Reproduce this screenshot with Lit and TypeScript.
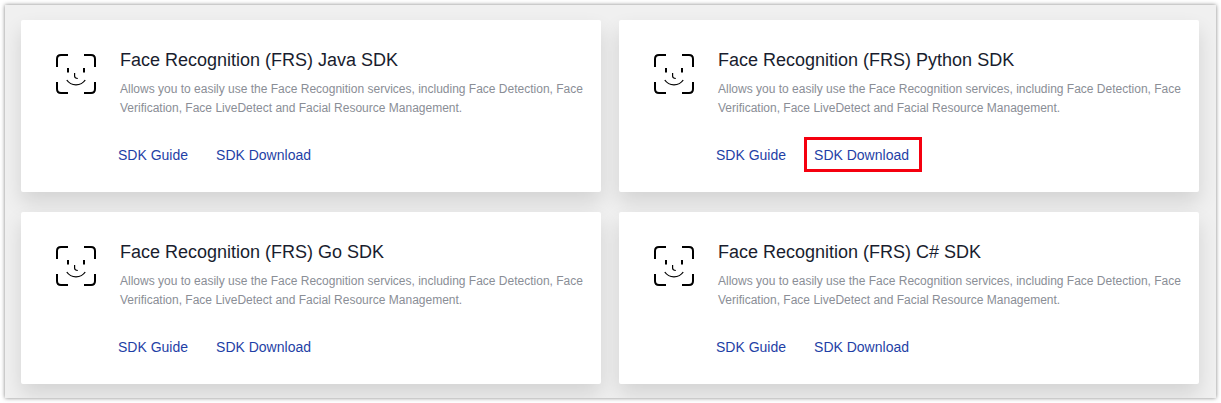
import { LitElement, html, css } from "lit";
import { customElement, property } from "lit/decorators.js";
import { classMap } from "lit/directives/class-map.js";

@customElement("sdk-card")
class SdkCard extends LitElement {
  @property() language = "";
  @property({ type: Boolean }) marked = false;

  static styles = css`
    :host {
      display: block;
      background: #fff;
      border-radius: 2px;
      box-shadow: 0 10px 20px rgba(0, 0, 0, 0.12);
    }
    .card {
      display: flex;
      align-items: flex-start;
      gap: 24px;
      padding: 28px 12px 20px 35px;
    }
    .icon {
      flex: none;
      display: block;
      width: 40px;
      height: 40px;
      margin-top: 6px;
    }
    .body {
      flex: 1;
      min-width: 0;
    }
    .title {
      margin: 0;
      font-size: 18px;
      line-height: 24px;
      font-weight: 400;
      color: #191d2e;
    }
    .text {
      margin: 8px 0 0;
      font-size: 12px;
      line-height: 19px;
      color: #8a8e96;
    }
    .links {
      display: flex;
      gap: 5px;
      margin: 19px 0 0 -12px;
    }
    .link {
      padding: 7px 10px 5px 7px;
      border: 3px solid transparent;
      font-size: 14px;
      line-height: 17px;
      color: #1f3fa6;
      text-decoration: none;
    }
    .marked {
      border-color: #f5000f;
    }
  `;

  render() {
    return html`
      <article class="card">
        <svg class="icon" viewBox="0 0 40 40" fill="none" stroke="#000" aria-hidden="true">
          <path
            stroke-width="2"
            d="M1 13V5Q1 1 5 1H12M28 1H35Q39 1 39 5V13M39 28V35Q39 39 35 39H28M12 39H5Q1 39 1 35V28"
          />
          <path stroke-width="2" d="M12 14V18.500M28 14V18.500" />
          <path stroke-width="1.200" d="M18.600 19V22.200Q18.800 24.300 21.800 24.500" />
          <path stroke-width="1.300" d="M10.800 26Q14 30.800 20 30.800T29.200 26" />
        </svg>
        <div class="body">
          <h2 class="title">Face Recognition (FRS) ${this.language} SDK</h2>
          <p class="text">
            Allows you to easily use the Face Recognition services, including Face Detection, Face
            Verification, Face LiveDetect and Facial Resource Management.
          </p>
          <nav class="links">
            <a class="link" href="#guide">SDK Guide</a>
            <a class=${classMap({ link: true, marked: this.marked })} href="#download">SDK Download</a>
          </nav>
        </div>
      </article>
    `;
  }
}

@customElement("app-root")
class AppRoot extends LitElement {
  static styles = css`
    :host {
      display: block;
      padding: 5px;
      background: #fff;
      font-family: "Liberation Sans", Arial, sans-serif;
    }
    .panel {
      display: grid;
      grid-template-columns: 1fr 1fr;
      gap: 20px 18px;
      padding: 15px 17px 14px 16px;
      overflow: hidden;
      background: #f0f0f0;
      box-shadow: 0 0 4px rgba(0, 0, 0, 0.5);
    }
  `;

  private languages = ["Java", "Python", "Go", "C#"];

  render() {
    return html`
      <main class="panel">
        ${this.languages.map(
          (name) => html`<sdk-card .language=${name} .marked=${name === "Python"}></sdk-card>`
        )}
      </main>
    `;
  }
}
